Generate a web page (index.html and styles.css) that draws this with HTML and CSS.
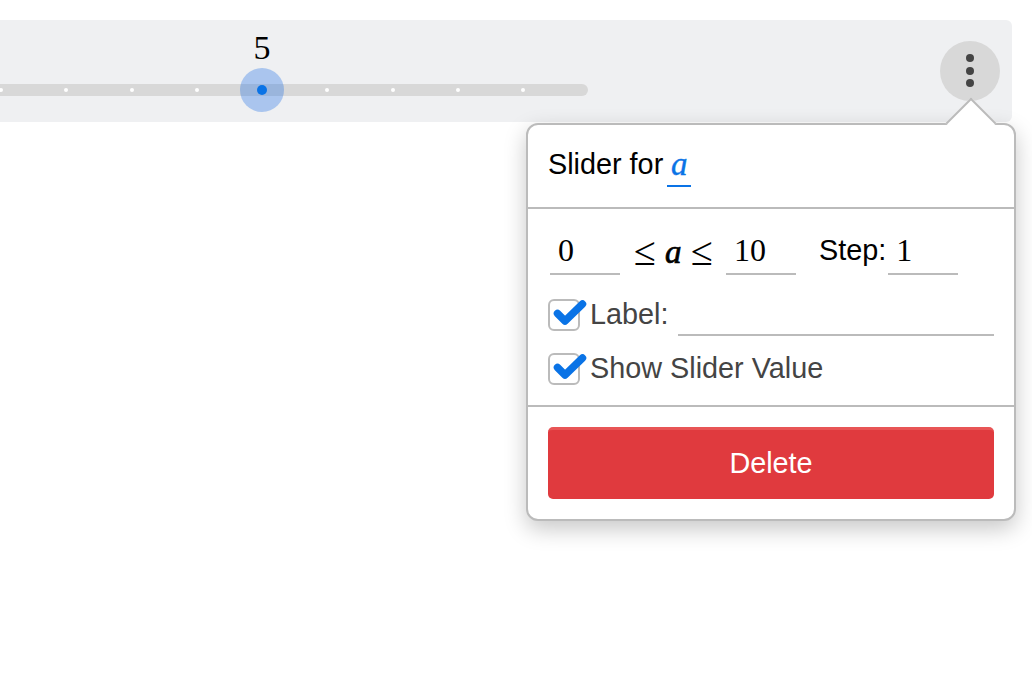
FILE: index.html
```html
<!DOCTYPE html>
<html lang="en">
<head>
    <meta charset="UTF-8">
    <title>Slider settings</title>
    <link rel="stylesheet" href="styles.css">
</head>
<body>

    <div class="slider-bar">
        <div class="slider-area">
            <div class="track">
                <span class="tick"></span>
                <span class="tick"></span>
                <span class="tick"></span>
                <span class="tick"></span>
                <span class="tick hidden"></span>
                <span class="tick"></span>
                <span class="tick"></span>
                <span class="tick"></span>
                <span class="tick"></span>
            </div>
            <div class="thumb">
                <span class="thumb-value">5</span>
                <span class="thumb-dot"></span>
            </div>
        </div>
        <button class="menu-btn" aria-label="Options">
            <span></span><span></span><span></span>
        </button>
    </div>

    <div class="popover">
        <div class="caret"></div>

        <div class="section title-row">
            <span class="title-text">Slider for</span>
            <span class="var-name">a</span>
        </div>

        <div class="section settings">
            <div class="range-row">
                <span class="num-input">0</span>
                <span class="math leq first-leq">≤</span>
                <span class="math var">a</span>
                <span class="math leq">≤</span>
                <span class="num-input max-input">10</span>
                <span class="step-label">Step:</span>
                <span class="num-input">1</span>
            </div>
            <div class="check-row label-row">
                <span class="checkbox">
                    <svg viewBox="0 0 40 34" width="40" height="34"><path d="M6.5 14.5 L14 22 L31.5 5" fill="none" stroke="#0a73e6" stroke-width="7.5" stroke-linecap="round" stroke-linejoin="round"/></svg>
                </span>
                <span class="check-text">Label:</span>
                <span class="label-input"></span>
            </div>
            <div class="check-row value-row">
                <span class="checkbox">
                    <svg viewBox="0 0 40 34" width="40" height="34"><path d="M6.5 14.5 L14 22 L31.5 5" fill="none" stroke="#0a73e6" stroke-width="7.5" stroke-linecap="round" stroke-linejoin="round"/></svg>
                </span>
                <span class="check-text">Show Slider Value</span>
            </div>
        </div>

        <div class="section delete-row">
            <button class="delete-btn">Delete</button>
        </div>
    </div>

</body>
</html>
```

FILE: styles.css
```css
html, body {
    height: 100%;
}

body {
    margin: 0;
    background-color: #fff;
    font-family: "Liberation Sans", Arial, sans-serif;
    font-size: 28.8px;
    color: #000;
    overflow: hidden;
    position: relative;
}

.slider-bar {
    display: flex;
    align-items: flex-start;
    justify-content: space-between;
    height: 102px;
    margin: 20px 20px 0 0;
    background-color: #eff0f2;
    border-radius: 0 6px 6px 0;
}

.slider-area {
    position: relative;
    width: 588px;
    height: 102px;
}

.track {
    display: flex;
    align-items: center;
    gap: 61.3px;
    height: 12px;
    margin: 64px 0 0 -70px;
    padding-left: 69px;
    background-color: #d8d8d8;
    border-radius: 6px;
}

.tick {
    flex: none;
    width: 4px;
    height: 4px;
    border-radius: 50%;
    background-color: #fff;
}

.tick.hidden {
    visibility: hidden;
}

.thumb {
    position: absolute;
    left: 240px;
    top: 48px;
    width: 44px;
    height: 44px;
    border-radius: 50%;
    background-color: rgba(10, 100, 230, 0.3);
    display: flex;
    align-items: center;
    justify-content: center;
}

.thumb-dot {
    width: 10px;
    height: 10px;
    border-radius: 50%;
    background-color: #0a73e6;
}

.thumb-value {
    position: absolute;
    top: -39px;
    left: 0;
    width: 44px;
    text-align: center;
    font-family: "Liberation Serif", serif;
    font-size: 34px;
    line-height: 37px;
}

.menu-btn {
    display: flex;
    flex-direction: column;
    align-items: center;
    justify-content: center;
    gap: 4.5px;
    width: 60px;
    height: 60px;
    margin: 21px 12px 0 0;
    padding: 0 0 1px;
    border: none;
    border-radius: 50%;
    background-color: #d8d8d8;
}

.menu-btn span {
    width: 8px;
    height: 8px;
    border-radius: 50%;
    background-color: #444;
}

.popover {
    position: absolute;
    left: 526px;
    top: 123px;
    width: 486px;
    height: 394px;
    display: flex;
    flex-direction: column;
    background-color: #fff;
    border: 2px solid #bbb;
    border-radius: 12px;
    box-shadow: 0 8px 22px rgba(0, 0, 0, 0.22);
}

.caret {
    position: absolute;
    top: -20px;
    right: 25.5px;
    width: 36px;
    height: 36px;
    background-color: #fff;
    border-top: 2px solid #bbb;
    border-left: 2px solid #bbb;
    box-sizing: border-box;
    transform: rotate(45deg);
}

.section {
    padding: 0 20px;
    position: relative;
}

.title-row {
    display: flex;
    align-items: center;
    gap: 4px;
    height: 82px;
    border-bottom: 2px solid #bbb;
}

.title-text {
    margin-bottom: 4px;
}

.var-name {
    width: 24px;
    height: 30px;
    margin-top: 10px;
    border-bottom: 2px solid #0a73e6;
    color: #0a73e6;
    font-family: "Liberation Serif", serif;
    font-style: italic;
    font-size: 33px;
    line-height: 18px;
    text-align: center;
    -webkit-text-stroke: 0.4px #0a73e6;
}

.settings {
    height: 196px;
    border-bottom: 2px solid #bbb;
    color: #444;
}

.range-row {
    display: flex;
    align-items: flex-start;
    height: 65px;
    padding-top: 21px;
    box-sizing: border-box;
    color: #000;
}

.num-input {
    flex: none;
    width: 70px;
    height: 45px;
    box-sizing: border-box;
    margin-left: 2px;
    padding-left: 8px;
    border-bottom: 2px solid #bbb;
    font-family: "Liberation Serif", serif;
    font-size: 32px;
    line-height: 40px;
}

.math {
    flex: none;
    font-family: "Liberation Serif", serif;
    font-size: 33px;
    line-height: 44px;
    text-align: center;
}

.leq {
    width: 21px;
    font-size: 40px;
}

.first-leq {
    margin-left: 14px;
}

.var {
    width: 15px;
    margin: 0 10px 0 10px;
    font-style: italic;
    -webkit-text-stroke: 0.7px #000;
}

.var + .leq {
    margin-left: 1px;
}

.max-input {
    margin-left: 14px;
}

.step-label {
    margin-left: 23px;
    line-height: 40px;
}

.step-label + .num-input {
    margin-left: 2px;
}

.check-row {
    display: flex;
    align-items: center;
    gap: 10px;
}

.label-row {
    height: 48px;
    margin-top: 17px;
}

.value-row {
    height: 48px;
    margin-top: 6px;
}

.check-text {
    margin-bottom: 2px;
}

.checkbox {
    position: relative;
    flex: none;
    width: 32px;
    height: 32px;
    box-sizing: border-box;
    border: 2px solid #bbb;
    border-radius: 6px;
}

.checkbox svg {
    position: absolute;
    left: 1px;
    top: -2px;
}

.label-input {
    flex: 1;
    height: 42px;
    box-sizing: border-box;
    border-bottom: 2px solid #bbb;
}

.delete-row {
    padding-top: 20px;
}

.delete-btn {
    display: block;
    width: 100%;
    height: 72px;
    padding: 0 0 2px;
    border: none;
    border-top: 3px solid #e85556;
    border-radius: 5px;
    background-color: #e03a3e;
    color: #fff;
    font-family: inherit;
    font-size: 28.8px;
}
```
